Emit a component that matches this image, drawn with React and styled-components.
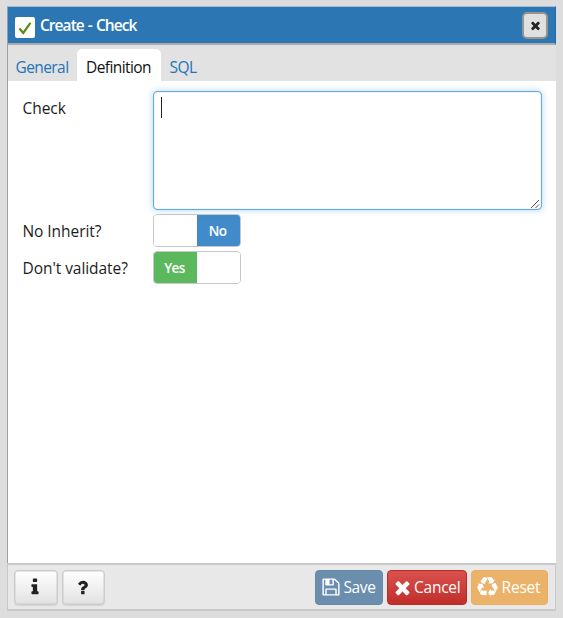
import React from 'react';
import styled, { createGlobalStyle } from 'styled-components';

const GlobalStyle = createGlobalStyle`
  *, *::before, *::after { box-sizing: border-box; }
  body {
    margin: 0;
    background: #dddddd;
    font-family: 'Open Sans', sans-serif;
    font-size: 15.5px;
    color: #1c1c1c;
  }
  button { font-family: inherit; }
`;

const Page = styled.div`
  height: 618px;
  padding: 6px 7px 7px 7px;
  overflow: hidden;
`;

const Dialog = styled.section`
  height: 605px;
  display: flex;
  flex-direction: column;
  background: #ffffff;
`;

const Header = styled.header`
  height: 39px;
  flex: none;
  display: flex;
  align-items: center;
  padding: 0 7px 0 7px;
  background: #2c76b4;
  border: 1px solid #1d6bab;
  border-top: 1px solid #a3bfd6;
  border-bottom: 2px solid #aaaaaa;
  border-left-color: #8aa2b8;
`;

const TitleIcon = styled.span`
  width: 20px;
  height: 21px;
  margin-top: 4px;
  border-radius: 2px;
  background: #ffffff;
  display: flex;
`;

const Title = styled.h1`
  margin: 0 auto 0 5px;
  font-size: 15.5px;
  line-height: 22px;
  font-weight: 600;
  letter-spacing: -0.95px;
  word-spacing: 1px;
  color: #ffffff;
`;

const CloseButton = styled.button`
  width: 26px;
  height: 27px;
  padding: 0;
  display: flex;
  align-items: center;
  justify-content: center;
  border: 2px solid #999390;
  border-radius: 5px;
  background: #e0e0e0;
  color: #222222;
`;

const Content = styled.div`
  flex: 1;
  display: flex;
  flex-direction: column;
  border-left: 1px solid #a0a0a0;
`;

const Tabs = styled.nav`
  height: 36px;
  flex: none;
  display: flex;
  align-items: flex-end;
  background: #e2e2e2;
`;

const Tab = styled.button`
  width: ${(p) => p.$width}px;
  height: 32px;
  padding: 3px 1px 0 0;
  border: 0;
  border-radius: 5px 5px 0 0;
  background: ${(p) => (p.$active ? '#ffffff' : 'transparent')};
  color: ${(p) => (p.$active ? '#111111' : '#2474b5')};
  font-size: 15.5px;
  letter-spacing: -0.58px;
  line-height: 20px;
  text-align: center;
  white-space: nowrap;
`;

const Form = styled.div`
  display: grid;
  grid-template-columns: 130px 1fr;
  grid-template-rows: 119px 33px 33px;
  row-gap: 4px;
  padding: 10px 14px 0 15px;
`;

const Label = styled.label`
  margin-left: -0.5px;
  padding-top: 6px;
  letter-spacing: -0.06px;
  line-height: 22px;
  white-space: nowrap;
`;

const Editor = styled.div`
  position: relative;
  padding: 5px 7px;
  border: 1px solid #66a9e0;
  border-radius: 4px;
  background: #ffffff;
  box-shadow: 0 0 7px rgba(102, 175, 233, 0.5), inset 0 0 1px #66a9e0;
`;

const Caret = styled.span`
  display: block;
  width: 1px;
  height: 21px;
  background: #222222;
`;

const Grip = styled.svg`
  position: absolute;
  right: 1px;
  bottom: 0;
`;

const Switch = styled.div`
  width: 88px;
  height: 33px;
  display: grid;
  grid-template-columns: 1fr 1fr;
  overflow: hidden;
  border: 1px solid #c8c8c8;
  border-radius: 4px;
  background: #ffffff;
`;

const SwitchHalf = styled.span`
  display: flex;
  align-items: center;
  justify-content: center;
  padding: 0 2px 0 0;
  background: ${(p) => p.$color || '#ffffff'};
  color: #ffffff;
  font-size: 13.5px;
  font-weight: 600;
  letter-spacing: -0.6px;
`;

const Footer = styled.footer`
  height: 48px;
  flex: none;
  display: flex;
  align-items: center;
  gap: 4px;
  padding: 0 7px 0 6px;
  border: 2px solid #c8c8c8;
  border-width: 2px 1px 2px 1px;
  background: #e8e8e8;
`;

const Spacer = styled.span`
  flex: 1;
`;

const buttonColors = {
  plain: { fill: 'linear-gradient(#ffffff, #e2e2e2)', line: '#cccccc', text: '#222222' },
  save: { fill: '#6b8eae', line: '#6689a8', text: '#ffffff' },
  cancel: { fill: 'linear-gradient(#d9514e, #c12e2a)', line: '#b92c28', text: '#ffffff' },
  reset: { fill: '#ebb269', line: '#e9ae62', text: '#ffffff' },
};

const Button = styled.button`
  width: ${(p) => p.$width}px;
  height: 35px;
  padding: 0 2px 0 0;
  display: flex;
  align-items: center;
  justify-content: center;
  gap: ${(p) => p.$gap || 3}px;
  border: 1px solid ${(p) => buttonColors[p.$kind].line};
  border-radius: 4px;
  background: ${(p) => buttonColors[p.$kind].fill};
  color: ${(p) => buttonColors[p.$kind].text};
  font-size: 15.5px;
  letter-spacing: ${(p) => p.$tracking || -0.6}px;
  white-space: nowrap;
`;

const HelpButton = styled(Button)`
  box-shadow: inset 0 0 0 0.5px #cccccc, 0 1px 1px rgba(0, 0, 0, 0.08);
`;

const glyphs = {
  times:
    'M1490 1322q0 40-28 68l-136 136q-28 28-68 28t-68-28l-294-294-294 294q-28 28-68 28t-68-28l-136-136q-28-28-28-68t28-68l294-294-294-294q-28-28-28-68t28-68l136-136q28-28 68-28t68 28l294 294 294-294q28-28 68-28t68 28l136 136q28 28 28 68t-28 68l-294 294 294 294q28 28 28 68z',
  info:
    'M1216 1344v128q0 26-19 45t-45 19h-512q-26 0-45-19t-19-45v-128q0-26 19-45t45-19h64v-384h-64q-26 0-45-19t-19-45v-128q0-26 19-45t45-19h384q26 0 45 19t19 45v576h64q26 0 45 19t19 45zm-128-1152v192q0 26-19 45t-45 19h-256q-26 0-45-19t-19-45v-192q0-26 19-45t45-19h256q26 0 45 19t19 45z',
  question:
    'M1088 1256v240q0 16-12 28t-28 12h-240q-16 0-28-12t-12-28v-240q0-16 12-28t28-12h240q16 0 28 12t12 28zm316-600q0 54-15.500 101t-35 76.500-55 59.500-57.500 43.500-61 35.500q-41 23-68.500 65t-27.500 67q0 17-12 32.500t-28 15.500h-240q-15 0-25.500-18.500t-10.500-37.500v-45q0-83 65-156.500t143-108.500q59-27 84-56t25-76q0-42-46.500-74t-107.500-32q-65 0-108 29-35 25-107 115-13 16-31 16-12 0-25-8l-164-125q-13-10-15.500-25t5.500-28q160-266 464-266 80 0 161 31t146 83 106 127.500 41 158.500z',
  save:
    'M512 1536h768v-384h-768v384zm896 0h128v-896q0-14-10-38.500t-20-34.500l-281-281q-10-10-34-20t-39-10v416q0 40-28 68t-68 28h-576q-40 0-68-28t-28-68v-416h-128v1280h128v-416q0-40 28-68t68-28h832q40 0 68 28t28 68v416zm-384-928v-320q0-13-9.500-22.500t-22.500-9.500h-192q-13 0-22.500 9.500t-9.500 22.500v320q0 13 9.500 22.500t22.500 9.500h192q13 0 22.500-9.500t9.500-22.500zm640 32v928q0 40-28 68t-68 28h-1344q-40 0-68-28t-28-68v-1344q0-40 28-68t68-28h928q40 0 88 20t76 48l280 280q28 28 48 76t20 88z',
  recycle:
    'M836 1169l-15 368-2 22-420-29q-36-3-67-31.500t-47-65.500q-11-27-14.500-55t4-65 12-55 21.500-64 19-53q78 12 509 28zm-387-586l180 379-147-92q-63 72-111.500 144.500t-72.500 125-39.500 94.500-18.500 63l-4 21-190-357q-17-26-18-56t6-47l8-18q35-63 114-188l-140-86zm1231 517l-188 359q-12 29-36.500 46.500t-43.500 20.500l-18 4q-71 7-219 12l8 164-230-367 211-362 7 173q170 16 283 5t170-33zm-785-924q-47 63-265 435l-317-187-19-12 225-356q20-31 60-45t80-10q24 2 48.500 12t42 21 41.500 33 36 34.500 36 39.500 32 35zm655 307l212 363q18 37 12.500 76t-27.500 74q-13 20-33 37t-38 28-48.500 22-47 16-51.500 14-46 12q-34-72-265-436l313-195zm-143-226l142-83-220 373-419-20 151-86q-34-89-75-166t-75.500-123.500-64.500-80-47-46.500l-17-13 405 1q31-3 58 10.500t39 28.500l11 15q39 61 112 190z',
};

function Glyph({ name, size }) {
  return (
    <svg width={size} height={size} viewBox="0 0 1792 1792" fill="currentColor" aria-hidden="true">
      <path d={glyphs[name]} />
    </svg>
  );
}

export default function App() {
  return (
    <Page>
      <GlobalStyle />
      <Dialog>
        <Header>
          <TitleIcon>
            <svg width="20" height="21" viewBox="0 0 20 21">
              <path d="M4.400 11.600 8.300 16 15.400 5.800" fill="none" stroke="#5c8a0c" strokeWidth="2.200" />
            </svg>
          </TitleIcon>
          <Title>Create - Check</Title>
          <CloseButton aria-label="Close">
            <Glyph name="times" size={13} />
          </CloseButton>
        </Header>
        <Content>
          <Tabs>
            <Tab $width={69}>General</Tab>
            <Tab $width={84} $active>Definition</Tab>
            <Tab $width={45}>SQL</Tab>
          </Tabs>
          <Form>
            <Label>Check</Label>
            <Editor>
              <Caret />
              <Grip width="10" height="10" viewBox="0 0 10 10" stroke="#555555" fill="none">
                <path d="M1 9 9 1M5.500 9 9 5.500" />
              </Grip>
            </Editor>
            <Label>No Inherit?</Label>
            <Switch>
              <SwitchHalf />
              <SwitchHalf $color="#428bca">No</SwitchHalf>
            </Switch>
            <Label>Don't validate?</Label>
            <Switch>
              <SwitchHalf $color="#5cb85c">Yes</SwitchHalf>
              <SwitchHalf />
            </Switch>
          </Form>
        </Content>
        <Footer>
          <HelpButton $kind="plain" $width={44} aria-label="Info">
            <Glyph name="info" size={20} />
          </HelpButton>
          <HelpButton $kind="plain" $width={43} aria-label="Help">
            <Glyph name="question" size={19} />
          </HelpButton>
          <Spacer />
          <Button $kind="save" $width={68} $tracking={-0.4}>
            <Glyph name="save" size={20} />
            Save
          </Button>
          <Button $kind="cancel" $width={80} $tracking={-0.25} $gap={1.5}>
            <Glyph name="times" size={21} />
            Cancel
          </Button>
          <Button $kind="reset" $width={77} $tracking={-0.2} $gap={4}>
            <Glyph name="recycle" size={21} />
            Reset
          </Button>
        </Footer>
      </Dialog>
    </Page>
  );
}
